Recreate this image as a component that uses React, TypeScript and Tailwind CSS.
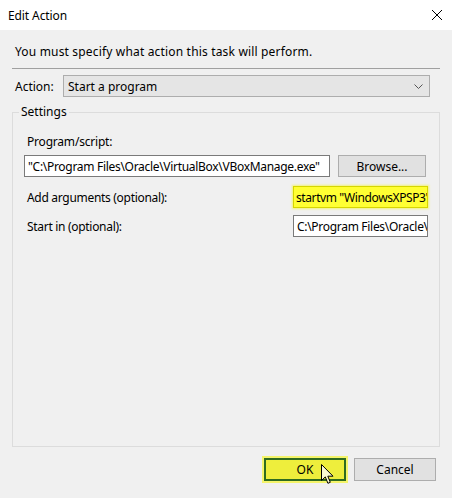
import React from 'react';

const FONT = { fontFamily: '"Segoe UI", "Noto Sans", "Liberation Sans", sans-serif' };

function Cursor() {
  return (
    <svg width="13" height="21" viewBox="0 0 13 21" className="absolute left-[321px] top-[464px]">
      <path
        d="M0.5 0.5 L0.5 16.5 L4.3 12.9 L6.9 19.3 L9.3 18.3 L6.8 12.2 L12 12.2 Z"
        fill="#fbfbd0"
        stroke="#000"
        strokeWidth="1"
      />
    </svg>
  );
}

export default function App() {
  return (
    <div className="relative w-[452px] h-[498px] bg-[#f0f0f0] flex flex-col text-[12px] text-black overflow-hidden" style={FONT}>
      {/* title bar */}
      <div className="h-[30px] bg-white flex items-center justify-between pl-2 pr-[10px]">
        <span className="pt-[2px] leading-4 tracking-[-0.1px]">Edit Action</span>
        <svg width="10" height="10" viewBox="0 0 10 10">
          <path d="M0 0 L10 10 M10 0 L0 10" stroke="#000" strokeWidth="1" />
        </svg>
      </div>

      <div className="flex flex-col px-3">
        <p className="mt-[14px] pl-[3px] leading-4 tracking-[0.17px] whitespace-nowrap">You must specify what action this task will perform.</p>
        <div className="mt-[8px] h-px bg-[#a0a0a0]" />

        <div className="mt-[6px] flex items-center">
          <span className="pl-[3px] pt-[2px] w-[51px] leading-4">Action:</span>
          <div className="w-[367px] h-[22px] bg-[#e5e5e5] border border-[#adadad] flex items-center justify-between pl-[4px] pr-[6px]">
            <span className="pt-[1px] leading-4">Start a program</span>
            <svg width="9" height="5" viewBox="0 0 9 5">
              <path d="M0.5 0.5 L4.5 4.5 L8.5 0.5" stroke="#555" fill="none" strokeWidth="1" />
            </svg>
          </div>
        </div>

        <fieldset className="mt-[7px] h-[343px] border border-[#dcdcdc] flex flex-col">
          <legend className="ml-[6px] px-[2px] leading-4">Settings</legend>
          <span className="mt-[14px] pl-[14px] leading-4 tracking-[-0.2px]">Program/script:</span>
          <div className="mt-[5px] flex items-center pl-[11px]">
            <div className="w-[306px] h-[22px] bg-white border border-[#7a7a7a] flex items-center pl-[3px] pt-[1px] leading-4 tracking-[-0.3px] whitespace-nowrap overflow-hidden">
              "C:\Program Files\Oracle\VirtualBox\VBoxManage.exe"
            </div>
            <button className="ml-[8px] w-[88px] h-[22px] bg-[#e1e1e1] border border-[#adadad] pt-[2px] leading-4">Browse...</button>
          </div>

          <div className="mt-[9px] flex items-center pl-[14px] pr-[11px]">
            <span className="flex-1 pt-[2px] leading-4 tracking-[-0.3px]">Add arguments (optional):</span>
            <div className="w-[135px] h-[22px] bg-[#ffff33] border border-[#d6d600] shadow-[0_0_2px_1px_#f2f27a] flex items-center pl-[2px] pt-[1px] leading-4 tracking-[-0.4px] whitespace-nowrap overflow-hidden">
              startvm "WindowsXPSP3"
            </div>
          </div>

          <div className="mt-[7px] flex items-center pl-[14px] pr-[11px]">
            <span className="flex-1 pt-[2px] leading-4 tracking-[-0.3px]">Start in (optional):</span>
            <div className="w-[135px] h-[22px] bg-white border border-[#7a7a7a] flex items-center pl-[3px] pt-[1px] leading-4 tracking-[-0.3px] whitespace-nowrap overflow-hidden">
              C:\Program Files\Oracle\VirtualBox
            </div>
          </div>
        </fieldset>
      </div>

      <div className="mt-[11px] flex justify-end gap-[8px] pr-[16px]">
        <button className="w-[82px] h-[23px] bg-[#eeee3c] border-2 border-[#2f6b1f] shadow-[0_0_0_2px_#f4f46a] pt-[1px] leading-4">OK</button>
        <button className="w-[82px] h-[23px] bg-[#e1e1e1] border border-[#adadad] pt-[1px] leading-4">Cancel</button>
      </div>

      <Cursor />
    </div>
  );
}
